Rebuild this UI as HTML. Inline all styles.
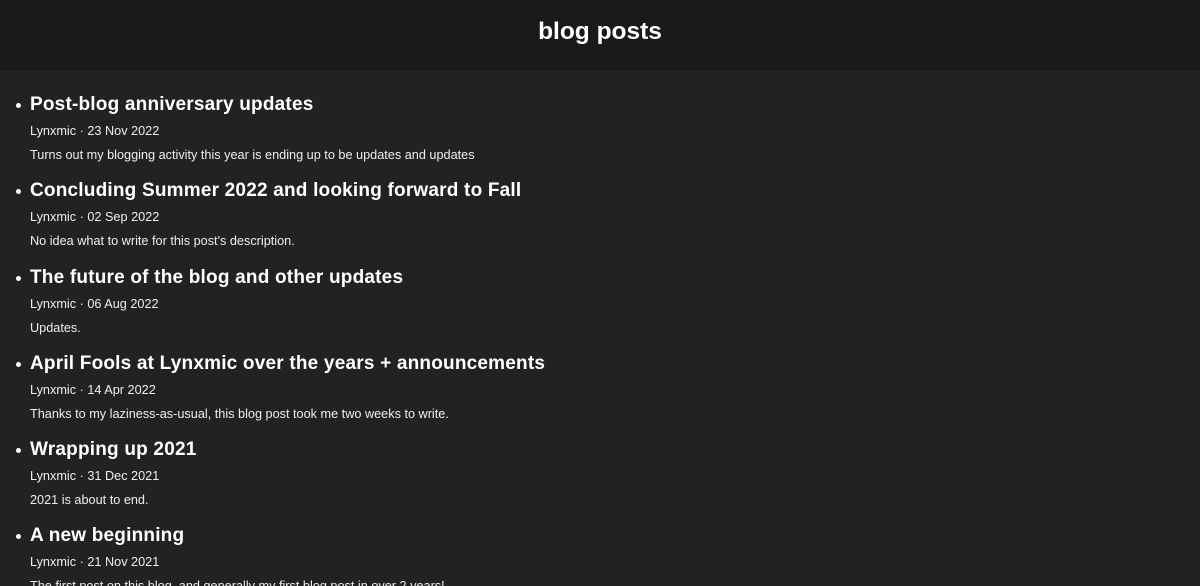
<!DOCTYPE html>
<html><head><meta charset="utf-8"><style>
html,body{margin:0;padding:0;background:#222222;color:#fff;width:1200px;height:586px;overflow:hidden;font-family:"Liberation Sans",sans-serif}
.hdr{height:71px;background:#1a1a1a;text-align:center}
.hdr h1{margin:0;font-size:24.5px;font-weight:bold;line-height:63px}
ul{margin:0;padding:0;list-style:none}
li{position:relative;height:86.3px;padding-left:30px}
li:before{content:"";position:absolute;left:16px;top:32px;width:5px;height:5px;border-radius:50%;background:#fff}
.t{position:absolute;top:23px;left:30px;font-size:19px;font-weight:bold;white-space:nowrap;letter-spacing:0.2px}
.m{position:absolute;top:53px;left:30px;font-size:12.7px;color:#eee;white-space:nowrap}
.d{position:absolute;top:77px;left:30px;font-size:12.7px;color:#eee;white-space:nowrap}
</style></head><body>
<div class="hdr"><h1>blog posts</h1></div>
<ul>
<li><div class="t">Post-blog anniversary updates</div><div class="m">Lynxmic · 23 Nov 2022</div><div class="d">Turns out my blogging activity this year is ending up to be updates and updates</div></li>
<li><div class="t">Concluding Summer 2022 and looking forward to Fall</div><div class="m">Lynxmic · 02 Sep 2022</div><div class="d">No idea what to write for this post's description.</div></li>
<li><div class="t">The future of the blog and other updates</div><div class="m">Lynxmic · 06 Aug 2022</div><div class="d">Updates.</div></li>
<li><div class="t">April Fools at Lynxmic over the years + announcements</div><div class="m">Lynxmic · 14 Apr 2022</div><div class="d">Thanks to my laziness-as-usual, this blog post took me two weeks to write.</div></li>
<li><div class="t">Wrapping up 2021</div><div class="m">Lynxmic · 31 Dec 2021</div><div class="d">2021 is about to end.</div></li>
<li><div class="t">A new beginning</div><div class="m">Lynxmic · 21 Nov 2021</div><div class="d">The first post on this blog, and generally my first blog post in over 2 years!</div></li>
</ul>
</body></html>
